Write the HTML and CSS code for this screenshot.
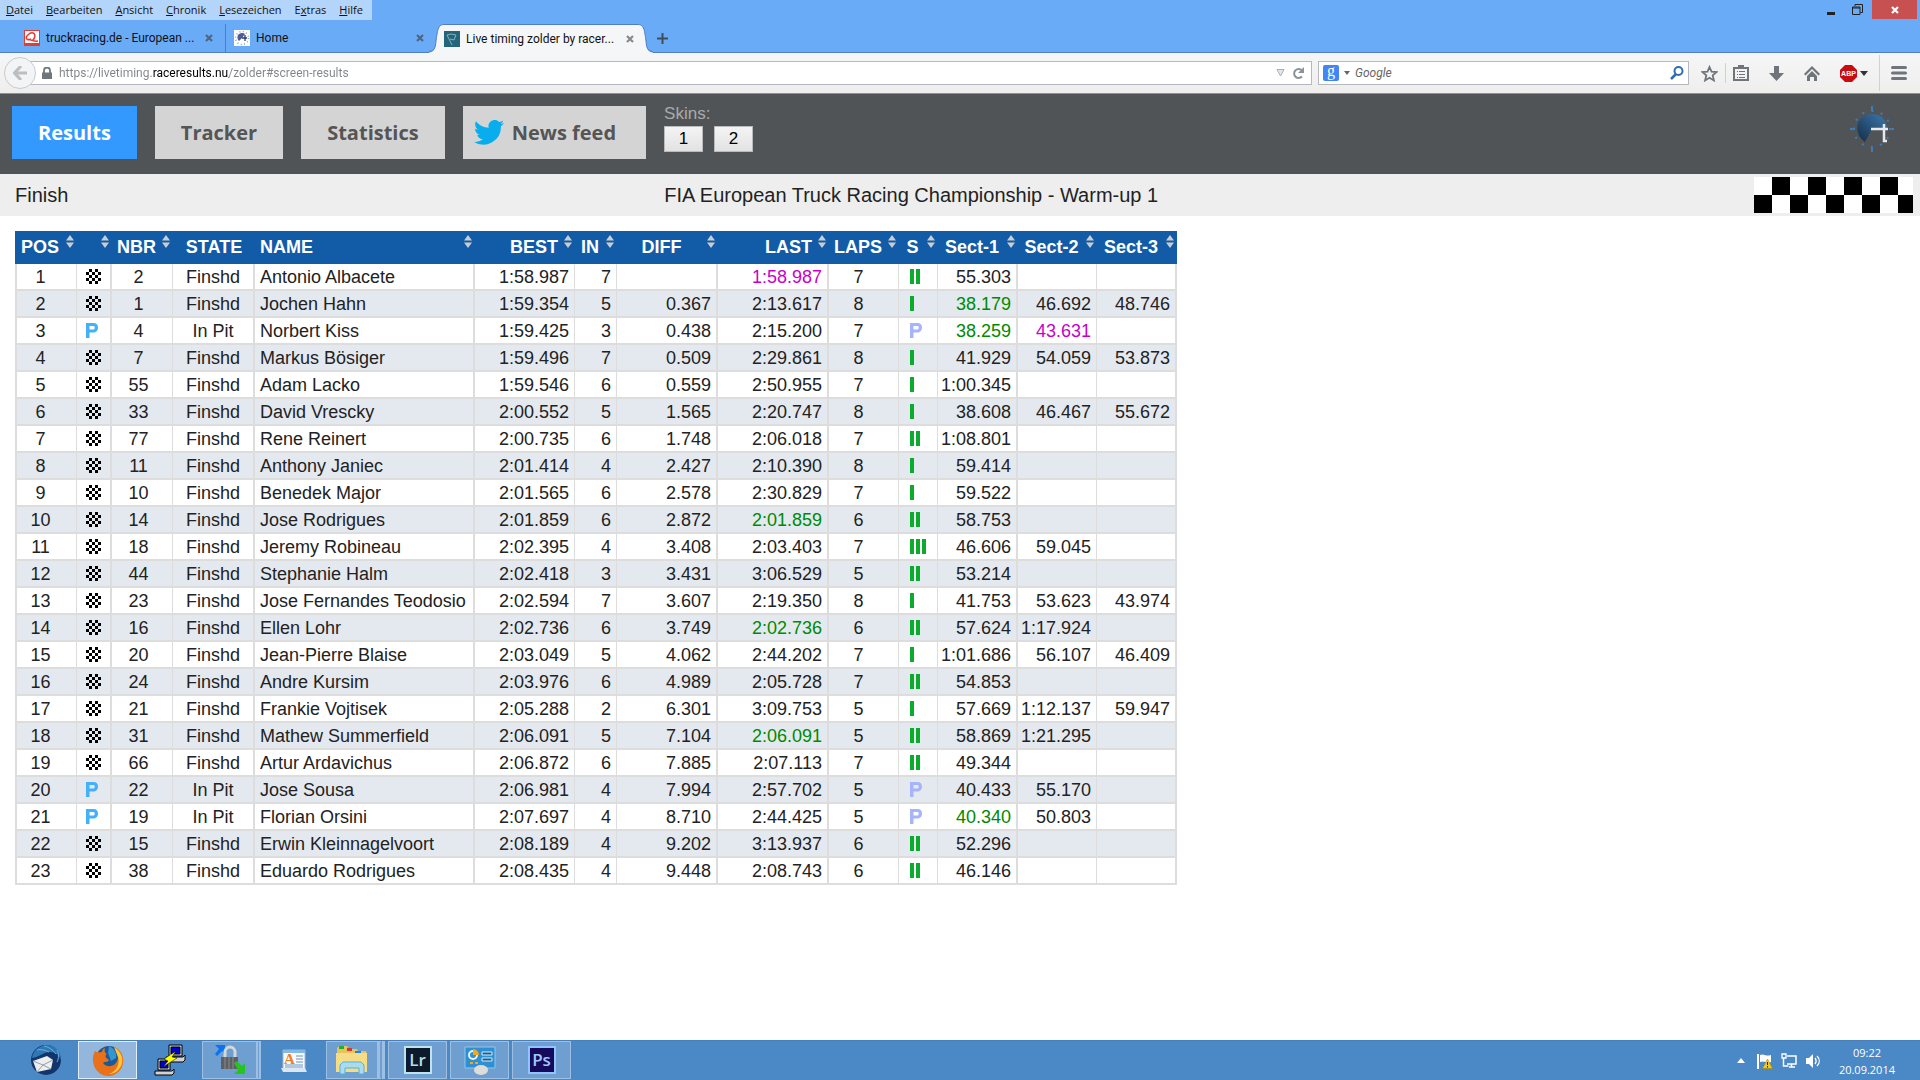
FILE: index.html
```html
<!DOCTYPE html>
<html lang="de">

<head>
  <meta charset="UTF-8">
  <meta name="viewport" content="width=device-width, initial-scale=1.0">
  <title>Live timing zolder by raceresults.nu</title>
  <link rel="stylesheet" href="styles.css">
</head>

<body>
  <svg class="sprite" aria-hidden="true">
    <symbol id="icon-flag" viewBox="0 0 15 15">
      <path d="M3 0h3v3h-3zM9 0h3v3h-3zM0 3h3v3h-3zM6 3h3v3h-3zM12 3h3v3h-3zM3 6h3v3h-3zM9 6h3v3h-3zM0 9h3v3h-3zM6 9h3v3h-3zM12 9h3v3h-3zM3 12h3v3h-3zM9 12h3v3h-3z" fill="#000"/>
    </symbol>
    <symbol id="icon-park" viewBox="0 0 12 15">
      <path d="M0 0h7.500c3 0 4.500 2 4.500 4.500s-1.500 5-4.500 5h-4v5.500h-3.500zM3.500 3v3.500h3.500c1.400 0 1.700-.8 1.700-1.800s-.3-1.700-1.700-1.700z" fill="currentColor" fill-rule="evenodd"/>
    </symbol>
    <symbol id="icon-sort" viewBox="0 0 8 13">
      <path d="M4 0l4 5.500h-8zM0 7.500h8l-4 5.500z" fill="#c9cdd1"/>
    </symbol>
    <symbol id="icon-close" viewBox="0 0 8 8">
      <path d="M1 1l6 6M7 1l-6 6" stroke="currentColor" stroke-width="2.200" fill="none"/>
    </symbol>
  </svg>

  <!-- Browser window -->
  <header class="browser">
    <div class="title-row">
      <nav class="menu-bar">
        <button><u>D</u>atei</button>
        <button><u>B</u>earbeiten</button>
        <button><u>A</u>nsicht</button>
        <button><u>C</u>hronik</button>
        <button><u>L</u>esezeichen</button>
        <button>E<u>x</u>tras</button>
        <button><u>H</u>ilfe</button>
      </nav>
      <div class="window-buttons">
        <button aria-label="Minimieren"><svg width="9" height="12" viewBox="0 0 9 12"><path d="M0 8h8v3h-8z" fill="#222"/></svg></button>
        <button aria-label="Verkleinern"><svg width="11" height="11" viewBox="0 0 11 11"><path d="M3 2V.5h7.500v8h-2M.5 3h7.500v7.500h-7.500zM.5 4h7.500" fill="none" stroke="#222"/></svg></button>
        <button class="window-close" aria-label="Schließen"><svg width="8" height="8"><use href="#icon-close"/></svg></button>
      </div>
    </div>

    <div class="tab-row">
      <div class="tab tab-first">
        <svg width="16" height="16" viewBox="0 0 16 16"><path d="M0 0h16v16h-16z" fill="#e23c35"/><path d="M1 1h14v12h-14z" fill="#fff"/><path d="M7 9c-4 2-6-1-4-3s3-4 6-3 2 5 0 7M3 10c3-2 6 2 11 1" stroke="#e23c35" stroke-width="1.500" fill="none"/></svg>
        <a href="#">truckracing.de - European ...</a>
        <button aria-label="Tab schließen"><svg width="8" height="8"><use href="#icon-close"/></svg></button>
      </div>
      <div class="tab tab-second">
        <svg width="16" height="16" viewBox="0 0 16 16"><path d="M0 0h16v16h-16z" fill="#fff"/><circle cx="8" cy="8" r="6.500" fill="none" stroke="#8c9cc4" stroke-width="1.500" stroke-dasharray="1 2.400"/><path d="M8 8L5 11a4 4 0 0 1 6-7z" fill="#4a5f98"/><path d="M8 8h5M11 5v6" stroke="#2c3e70" stroke-width="1.300"/></svg>
        <a href="#">Home</a>
        <button aria-label="Tab schließen"><svg width="8" height="8"><use href="#icon-close"/></svg></button>
      </div>
      <div class="tab tab-active">
        <svg class="tab-edge" width="15" height="29" viewBox="0 0 15 29"><path d="M0 28.500C8 28 6 20 8 10C9 3 11 .5 15 .5V29H0z" fill="#f5f6f7"/><path d="M0 27.500C8 27 6 20 8 10C9 3 11 .5 15 .5" fill="none" stroke="#4d7fc0"/></svg>
        <div class="tab-body">
          <svg width="16" height="16" viewBox="0 0 16 16"><path d="M0 0h16v16h-16z" fill="#23657a"/><path d="M3 4l4-1 5 1-2 5-4-1M3 4l5 10" stroke="#86b4be" fill="none"/></svg>
          <a href="#screen-results">Live timing zolder by racer...</a>
          <button aria-label="Tab schließen"><svg width="8" height="8"><use href="#icon-close"/></svg></button>
        </div>
        <svg class="tab-edge" width="15" height="29" viewBox="0 0 15 29"><path d="M15 28.500C7 28 9 20 7 10C6 3 4 .5 0 .5V29H15z" fill="#f5f6f7"/><path d="M15 27.500C7 27 9 20 7 10C6 3 4 .5 0 .5" fill="none" stroke="#4d7fc0"/></svg>
      </div>
      <button class="new-tab" aria-label="Neuer Tab"><svg width="11" height="11" viewBox="0 0 11 11"><path d="M5.500 0v11M0 5.500h11" stroke="#444d57" stroke-width="2"/></svg></button>
    </div>

    <div class="toolbar">
      <button class="back" aria-label="Zurück"><svg width="14" height="14" viewBox="0 0 14 14"><path d="M8 0L1.500 7L8 14M2 7h12" fill="none" stroke="#bcbfc2" stroke-width="3.200"/></svg></button>
      <div class="url-box">
        <svg width="10" height="12" viewBox="0 0 10 12"><path d="M2 6V3.500a3 3 0 0 1 6 0V6" fill="none" stroke="#70767a" stroke-width="1.800"/><path d="M0 5.500h10v6.500h-10z" fill="#70767a"/></svg>
        <input class="url" type="text" aria-label="Adresse" value="https://livetiming.raceresults.nu/zolder#screen-results">
        <svg width="9" height="8" viewBox="0 0 9 8"><path d="M1 .5h7L4.500 7z" fill="#e4e7ea" stroke="#a9afb5"/></svg>
        <button aria-label="Neu laden"><svg width="13" height="13" viewBox="0 0 13 13"><path d="M10 9.500a4.500 4.500 0 1 1 0-6" fill="none" stroke="#8b949b" stroke-width="2"/><path d="M12 0v6h-6z" fill="#8b949b"/></svg></button>
      </div>
      <div class="search-box">
        <span class="google">g</span>
        <svg width="6" height="4" viewBox="0 0 6 4"><path d="M0 0h6l-3 4z" fill="#666"/></svg>
        <input type="text" aria-label="Suche" placeholder="Google">
        <button aria-label="Suchen"><svg width="14" height="14" viewBox="0 0 14 14"><circle cx="8.500" cy="5" r="4" fill="none" stroke="#2f6dae" stroke-width="2"/><path d="M6 8L1 13" stroke="#2f6dae" stroke-width="2.500"/></svg></button>
      </div>
      <div class="tool-icons">
        <button aria-label="Lesezeichen hinzufügen"><svg width="17" height="17" viewBox="0 0 17 17"><path d="M8.500 2l2 4.600 5 .5-3.800 3.300 1.200 5-4.400-2.700-4.400 2.700 1.200-5L1.500 7.100l5-.5z" fill="none" stroke="#6f757a" stroke-width="1.800"/></svg></button>
        <span class="divider"></span>
        <button aria-label="Lesezeichen"><svg width="16" height="16" viewBox="0 0 16 16"><path d="M1 3h14v12h-14z" fill="none" stroke="#6f757a" stroke-width="2"/><path d="M5 0h6v4h-6zM4 6h1v1h-1zM6 6h6v1h-6zM4 9h1v1h-1zM6 9h6v1h-6zM4 12h1v1h-1zM6 12h6v1h-6z" fill="#6f757a"/></svg></button>
        <button aria-label="Downloads"><svg width="15" height="15" viewBox="0 0 15 15"><path d="M5 0h5v7h5l-7.500 8L0 7h5z" fill="#6f757a"/></svg></button>
        <button aria-label="Startseite"><svg width="16" height="15" viewBox="0 0 16 15"><path d="M8 0l8 8-1.500 1.500L8 3 1.500 9.500 0 8z" fill="#6f757a"/><path d="M8 5l5 5v5h-3v-4h-4v4h-3v-5z" fill="#6f757a"/></svg></button>
        <button class="abp" aria-label="Adblock Plus">
          <svg width="17" height="17" viewBox="0 0 17 17"><path d="M5 0h7l5 5v7l-5 5h-7l-5-5v-7z" fill="#c70d12"/><text x="8.500" y="11" text-anchor="middle">ABP</text></svg>
          <svg width="8" height="5" viewBox="0 0 8 5"><path d="M0 0h8l-4 5z" fill="#333"/></svg>
        </button>
        <span class="divider tall"></span>
        <button aria-label="Menü"><svg width="16" height="14" viewBox="0 0 16 14"><path d="M1.500 1.500h13M1.500 7h13M1.500 12.500h13" stroke="#6f757a" stroke-width="3" stroke-linecap="round"/></svg></button>
      </div>
    </div>
  </header>

  <!-- Live timing page -->
  <div class="page-header">
    <nav class="screens">
      <button class="screen active">Results</button>
      <button class="screen">Tracker</button>
      <button class="screen">Statistics</button>
      <button class="screen news">
        <svg width="30" height="25" viewBox="0 0 30 25"><path d="M30 3c-1.100.5-2.300.8-3.500 1 1.200-.8 2.200-2 2.700-3.400-1.200.7-2.500 1.200-3.900 1.500A6.200 6.200 0 0 0 14.700 7.800C9.600 7.500 5 5.100 2 1.200c-1.600 2.800-.8 6.400 1.900 8.300-1 0-2-.3-2.800-.8 0 3 2.100 5.600 4.900 6.200-.9.200-1.900.3-2.800.1.800 2.500 3.100 4.300 5.800 4.300A12.500 12.500 0 0 1 0 21.900 17.600 17.600 0 0 0 26.900 6.300C28.100 5.400 29.200 4.300 30 3z" fill="#08adee"/></svg>
        News feed
      </button>
    </nav>
    <div class="skins">
      <span>Skins:</span>
      <div class="skin-buttons">
        <button>1</button>
        <button>2</button>
      </div>
    </div>
    <svg class="logo" width="44" height="46" viewBox="0 0 44 46">
      <defs>
        <linearGradient id="dial" x1="1" y1="0" x2="0" y2="1">
          <stop offset="0" stop-color="#3c7ab0"/>
          <stop offset="1" stop-color="#152c45"/>
        </linearGradient>
      </defs>
      <circle cx="22" cy="23" r="18" fill="none" stroke="#3d7cb8" stroke-width="2" stroke-dasharray="2 7.425" stroke-dashoffset="1"/>
      <path d="M22 0v5M22 41v5M0 23h5M39 23h5" stroke="#3d7cb8" stroke-width="2"/>
      <path d="M22 23L15 36C3 28 5 8 22 8C31 8 37 14 37 23z" fill="url(#dial)"/>
      <path d="M21 23h17M34 18v17h3" stroke="#e6e9ed" stroke-width="2.500" fill="none"/>
    </svg>
  </div>

  <div class="session-bar">
    <span>Finish</span>
    <h1>FIA European Truck Racing Championship - Warm-up 1</h1>
    <div class="checkered"></div>
  </div>

  <main>
    <table class="results">
      <thead>
        <tr id="head-row"></tr>
      </thead>
      <tbody id="results-body"></tbody>
    </table>
  </main>

  <!-- Windows taskbar -->
  <footer class="taskbar">
    <div class="tasks">
      <button class="task" aria-label="Thunderbird">
        <svg width="32" height="32" viewBox="0 0 32 32"><circle cx="16" cy="16" r="15" fill="#12366b"/><path d="M2 14C3 5 11 1 18 1c8 1 13 8 13 15-2-5-6-8-10-8-7-1-11 5-19 6z" fill="#2d78b5"/><path d="M7 6c4-1 8 0 12 2M14 2c5 1 9 4 12 8M27 6c2 4 2 8 0 12" stroke="#6ab0dc" fill="none"/><path d="M3 17l14-5 6 4-2 9-14 3z" fill="#eceef0"/><path d="M3 17l10 4 10-5M7 28l6-7 8 4" fill="none" stroke="#9a9da1"/></svg>
      </button>
      <button class="task open current" aria-label="Firefox">
        <svg width="32" height="32" viewBox="0 0 32 32"><circle cx="17" cy="15" r="13" fill="#195a9c"/><path d="M17 2c5 2 8 7 7 12l-5 3-3-8z" fill="#3595cf"/><path d="M3 7c2 2 4 1 7 1 0-2 1-3 3-4-1 3 0 5 2 6-4 3 1 5 2 6-2 3-4 1-6 3 5 6 14 3 15-5 0-5-2-8-4-11 7 3 10 9 9 16A15 15 0 0 1 2 22C0 16 1 11 3 7z" fill="#e8711a"/><path d="M22 3c8 5 10 13 7 19-3 6-8 8-12 8 8-3 11-10 9-17z" fill="#ffc736"/></svg>
      </button>
      <button class="task" aria-label="PuTTY">
        <svg width="32" height="32" viewBox="0 0 32 32" stroke="#000"><path d="M15 1h13v11h-13zM12 13h17l2-2v5l-2 2h-17zM4 15h12v11h-12zM1 27h17l2-2v4l-2 2h-17z" fill="#d3d3d3"/><path d="M17 3h9v7h-9zM6 17h8v7h-8z" fill="#00c"/><path d="M22 7L10 15l4 2-5 6 14-9-5-1z" fill="#ff0" stroke-width=".5"/></svg>
      </button>
      <button class="task open stack-one" aria-label="VPN">
        <svg width="32" height="32" viewBox="0 0 32 32"><path d="M1 1h10v9l-3-3-5 5-2-2 4-5z" fill="#0b73f1"/><path d="M11 14V8a5 5 0 0 1 10 0v6" fill="none" stroke="#d5d7d9" stroke-width="3"/><path d="M7 13h17v12h-17z" fill="#5d6063"/><path d="M11 13v12M15 13v12M19 13v12" stroke="#888c8f"/><path d="M20 19l3-2 5 5 3-3v11h-11l4-4z" fill="#26c41f"/></svg>
      </button>
      <button class="task" aria-label="WordPad">
        <svg width="26" height="28" viewBox="0 0 26 28"><path d="M2 4h22v20h-22z" fill="#f7fafd" stroke="#9fb8d4"/><path d="M0 22h24l2 4h-24z" fill="#dae6f2"/><path d="M2 4h22v3h-22z" fill="#83b9e6"/><path d="M15 10h7M15 13h7M15 16h7M4 19h18M4 21h18" stroke="#6d93bd"/><text class="word-a" x="3" y="18">A</text></svg>
      </button>
      <button class="task open stack-two" aria-label="Explorer">
        <svg width="34" height="30" viewBox="0 0 34 30"><path d="M2 3l2-2h8l2 3h8l1 2h8l1 3v17h-30z" fill="#e6c35b"/><path d="M4 1h5v3h-5z" fill="#1caf3b"/><path d="M12 3h5v3h-5z" fill="#d33b28"/><path d="M20 6h6v3h-6z" fill="#2585d8"/><path d="M1 8h31v19h-31z" fill="#f5dc86"/><path d="M5 29v-9l3-3h18l3 3v9h-5v-6h-14v6z" fill="#a8dcf0" stroke="#5cafd1"/></svg>
      </button>
      <button class="task open" aria-label="Lightroom"><span class="adobe lr">Lr</span></button>
      <button class="task open" aria-label="Systemsteuerung">
        <svg width="32" height="30" viewBox="0 0 32 30"><path d="M1 2h30v21h-30z" fill="#2f8fd3" stroke="#8fc9ee"/><circle cx="9" cy="10" r="4" fill="none" stroke="#e8f4fc" stroke-width="2"/><path d="M9 10V4a6 6 0 0 1 6 6z" fill="#f7a51d"/><path d="M18 7h10v3h-10zM18 13h10v3h-10z" fill="#12619f" stroke="#d8eefa"/><path d="M6 18h3M11 18h3" stroke="#f7a51d" stroke-width="2"/><ellipse cx="17" cy="25" rx="7" ry="5" fill="#dcdcda"/></svg>
      </button>
      <button class="task open" aria-label="Photoshop"><span class="adobe ps">Ps</span></button>
    </div>
    <div class="tray">
      <svg width="8" height="5" viewBox="0 0 8 5"><path d="M4 0l4 5h-8z" fill="#fff"/></svg>
      <svg width="16" height="16" viewBox="0 0 16 16"><path d="M1 1v15" stroke="#fff" stroke-width="2"/><path d="M3 2c4-2 5 2 11 0v7c-5 2-6-2-11 0z" fill="#fff"/><path d="M10.500 6l5 9.500h-10z" fill="#f5c81e" stroke="#a17a00" stroke-width=".5"/><path d="M10.500 9v3M10.500 13v1.500" stroke="#222"/></svg>
      <svg width="16" height="16" viewBox="0 0 16 16"><path d="M6 3h9v8h-9M8 14h6M10.500 11v3M2.500 5v8h5" fill="none" stroke="#fff" stroke-width="1.500"/><path d="M1 1h4v4h-4z" fill="none" stroke="#fff" stroke-width="1.300"/></svg>
      <svg width="16" height="16" viewBox="0 0 16 16"><path d="M1 5h3l4-4v14l-4-4h-3z" fill="#fff"/><path d="M10 5c1.500 2 1.500 4 0 6M12 3c3 3 3 7 0 10" fill="none" stroke="#fff" stroke-width="1.300"/></svg>
      <time class="clock" datetime="2014-09-20T09:22">09:22<br>20.09.2014</time>
    </div>
  </footer>

  <script src="script.js"></script>
</body>

</html>
```
FILE: styles.css
```css
/* General Styles */
* {
  box-sizing: border-box;
}

body {
  display: flex;
  flex-direction: column;
  min-height: 100vh;
  margin: 0;
  background-color: #fff;
  color: #222;
  font-family: "Liberation Sans", Arial, sans-serif;
  font-size: 18px;
}

button,
input {
  margin: 0;
  padding: 0;
  border: none;
  background: none;
  color: inherit;
  font: inherit;
}

button {
  cursor: pointer;
}

svg {
  display: block;
  flex-shrink: 0;
}

.sprite {
  position: absolute;
  width: 0;
  height: 0;
}

/* Browser window */
.browser {
  background-color: #6aabf7;
  color: #111;
  font-family: Roboto, "Noto Sans", sans-serif;
  font-size: 12px;
}

.title-row {
  display: flex;
  justify-content: space-between;
  height: 20px;
}

.menu-bar {
  display: flex;
  gap: 1px;
  padding-right: 3px;
  background-color: #b3d4fb;
  font-family: "Open Sans", "Noto Sans", sans-serif;
  font-size: 11px;
}

.menu-bar button {
  padding: 0 6px 2px;
}

.window-buttons {
  display: flex;
  gap: 16px;
  height: 19px;
  padding-right: 3px;
}

.window-buttons button {
  display: flex;
  align-items: center;
}

.window-buttons .window-close {
  justify-content: center;
  width: 45px;
  margin-left: -7px;
  background-color: #c75050;
  color: #fff;
}

.tab-row {
  display: flex;
  align-items: flex-end;
  height: 33px;
  border-bottom: 1px solid #4d7fc0;
}

.tab {
  display: flex;
  align-items: center;
  height: 28px;
  gap: 6px;
}

.tab a {
  flex: 1;
  color: #111;
  text-decoration: none;
  white-space: nowrap;
}

.tab button {
  color: #4f6680;
}

.tab-first {
  width: 226px;
  padding: 0 12px 0 24px;
  border-right: 1px solid #4d7fc0;
}

.tab-second {
  width: 203px;
  padding: 0 5px 0 8px;
}

.tab-active {
  width: 224px;
  height: 29px;
  margin-bottom: -1px;
  gap: 0;
}

.tab-body {
  display: flex;
  flex: 1;
  align-items: center;
  gap: 6px;
  height: 29px;
  padding-right: 4px;
  border-top: 1px solid #4d7fc0;
  background-color: #f5f6f7;
}

.tab-active button {
  color: #858b91;
}

.new-tab {
  height: 28px;
  padding: 0 4px;
}

.toolbar {
  display: flex;
  align-items: center;
  height: 41px;
  padding-left: 4px;
  border-bottom: 1px solid #8f9092;
  background: linear-gradient(#f5f6f7, #efeeed);
}

.back {
  display: flex;
  align-items: center;
  justify-content: center;
  position: relative;
  width: 32px;
  height: 32px;
  border: 1px solid #c8cbce;
  border-radius: 50%;
  background-color: #f3f4f5;
}

.url-box,
.search-box {
  display: flex;
  align-items: center;
  height: 24px;
  border: 1px solid #b4b9bf;
  background-color: #fff;
}

.url-box {
  flex: 1;
  gap: 7px;
  margin-left: -8px;
  padding: 0 6px 0 13px;
}

/* The domain part is darker than the rest of the address */
.url {
  flex: 1;
  background: linear-gradient(90deg, #808488 94px, #000 94px, #000 170px, #808488 170px);
  background-clip: text;
  -webkit-background-clip: text;
  color: transparent;
}

.search-box {
  width: 371px;
  gap: 5px;
  margin-left: 6px;
  padding: 0 4px;
}

.search-box input {
  flex: 1;
}

.search-box input::placeholder {
  color: #666;
  font-style: italic;
}

.google {
  width: 16px;
  height: 16px;
  border-radius: 2px;
  background-color: #4285f4;
  color: #fff;
  font-family: "Liberation Serif", serif;
  font-size: 16px;
  line-height: 12px;
  text-align: center;
}

.tool-icons {
  display: flex;
  align-items: center;
  gap: 20px;
  height: 40px;
  padding: 0 13px 0 12px;
}

.tool-icons .divider {
  width: 1px;
  height: 20px;
  margin: 0 -13px;
  background-color: #cfd2d4;
}

.tool-icons .tall {
  height: 36px;
  margin: 0 -9px;
}

.abp {
  display: flex;
  align-items: center;
  gap: 3px;
}

.abp text {
  fill: #fff;
  font-family: "Liberation Sans", sans-serif;
  font-size: 7px;
  font-weight: bold;
}

/* Page header */
.page-header {
  display: flex;
  align-items: flex-start;
  gap: 18px;
  height: 80px;
  padding: 12px 26px 0 12px;
  background-color: #505457;
}

.screens {
  display: flex;
  gap: 18px;
}

.screen {
  height: 53px;
  padding: 0 26px;
  background-color: #d4d4d4;
  color: #555;
  font-family: "Open Sans", "Noto Sans", sans-serif;
  font-size: 20px;
  font-weight: bold;
}

.screen.active {
  background-color: #3399ff;
  color: #fff;
}

.news {
  display: flex;
  align-items: center;
  gap: 8px;
  padding: 0 30px 0 11px;
}

.skins {
  color: #aaa;
}

.skins span {
  display: block;
  height: 20px;
  line-height: 16px;
  font-size: 17px;
}

.skin-buttons {
  display: flex;
  gap: 11px;
}

.skin-buttons button {
  width: 39px;
  height: 26px;
  border: 1px solid #bbb;
  background: linear-gradient(#f4f4f4, #e2e2e2);
  color: #000;
  font-size: 17px;
}

.logo {
  margin-left: auto;
}

/* Session bar */
.session-bar {
  display: flex;
  align-items: center;
  justify-content: space-between;
  height: 42px;
  padding: 0 7px 0 15px;
  background-color: #eee;
  font-size: 20px;
}

.session-bar h1 {
  margin: 0;
  font-size: 20px;
  font-weight: normal;
}

.checkered {
  width: 159px;
  height: 36px;
  background: repeating-conic-gradient(#000 0 25%, #fff 0 50%) 0 0 / 36px 36px;
}

/* Results table */
main {
  flex: 1;
  padding: 15px;
}

.results {
  border-collapse: separate;
  border-spacing: 0;
  white-space: nowrap;
}

.results th {
  height: 33px;
  padding: 0;
  background-color: #115ba7;
  color: #fff;
}

.results th button {
  display: flex;
  width: 100%;
  height: 25px;
  gap: 6px;
  padding: 0 3px 0 5px;
  font-weight: bold;
  text-align: inherit;
}

.results th span {
  flex: 1;
  line-height: 24px;
}

.results td {
  height: 27px;
  padding: 2px 5px 0;
  border-right: 1px solid #ddd;
  border-bottom: 2px solid #ddd;
  line-height: 23px;
  text-align: right;
}

.results tr:nth-child(even) td {
  background-color: #e4e9f0;
}

.results td.pos {
  padding-right: 17px;
  border-left: 2px solid #ddd;
  text-align: center;
}

.results td.flag {
  padding: 0 9px;
}

.results td.nbr {
  padding-right: 12px;
  text-align: center;
}

.results td.laps {
  padding-right: 15px;
  text-align: center;
}

.results .state {
  text-align: center;
}

.results .name {
  text-align: left;
}

.results td.s {
  padding: 0 0 0 11px;
}

.results td.sect1,
.results td.sect2,
.results td.sect3 {
  padding-left: 2px;
}

.results td.flag,
.results td.state,
.results td.name,
.results td.diff,
.results td.last,
.results td.sect1,
.results td.sect3 {
  border-right-width: 2px;
}

.results th.best,
.results th.last {
  text-align: right;
}

.pos { width: 62px; }
.flag { width: 34px; }
.nbr { width: 61px; }
.state { width: 82px; }
.name { width: 220px; }
.best { width: 100px; }
.in { width: 42px; }
.diff { width: 101px; }
.last { width: 111px; }
.laps { width: 70px; }
.s { width: 39px; }
.sect1 { width: 80px; }
.sect2 { width: 79px; }
.sect3 { width: 80px; }

.personal-best {
  color: #008a00;
}

.overall-best {
  color: #c800c8;
}

.pit {
  color: #42b0fa;
}

.pit-sector {
  color: #a5b4fb;
}

.bars {
  display: flex;
  gap: 2px;
}

.bars i {
  width: 4px;
  height: 15px;
  background-color: #0bac2b;
}

/* Taskbar */
.taskbar {
  display: flex;
  justify-content: space-between;
  height: 40px;
  border-top: 1px solid #477fb9;
  background-color: #4b88c6;
  color: #fff;
  font-family: "Open Sans", "Noto Sans", sans-serif;
  font-size: 11px;
}

.tasks {
  display: flex;
  gap: 3px;
  padding-left: 16px;
}

.task {
  display: flex;
  align-items: center;
  justify-content: center;
  width: 59px;
  height: 38px;
}

.open {
  border: 1px solid #9dbfe2;
  background-color: #6f9fd0;
}

.current {
  border: 1px solid #e3edf7;
  background-color: #92b6dc;
}

.stack-one {
  border-right: 5px double #9dbfe2;
}

.stack-two {
  border-right: 8px double #9dbfe2;
}

.word-a {
  fill: #ef8022;
  font-family: "Liberation Serif", serif;
  font-size: 15px;
  font-weight: bold;
}

.adobe {
  width: 28px;
  height: 28px;
  border: 2px solid #bfe3ee;
  background-color: #0d1a2c;
  color: #b5dcea;
  font-size: 17px;
  font-weight: 600;
  line-height: 23px;
}

.ps {
  border-color: #8fc4ff;
  background-color: #150a5c;
  color: #9ccaff;
}

.tray {
  display: flex;
  align-items: center;
  gap: 8px;
  padding-right: 25px;
}

.tray svg:first-child {
  margin-right: 4px;
}

.clock {
  margin-left: 10px;
  line-height: 17px;
  text-align: center;
}
```
FILE: script.js
```js
const headRow = document.getElementById("head-row");
const resultsBody = document.getElementById("results-body");

const columns = [
  ["pos", "POS"], ["flag", ""], ["nbr", "NBR"], ["state", "STATE"], ["name", "NAME"],
  ["best", "BEST"], ["in", "IN"], ["diff", "DIFF"], ["last", "LAST"], ["laps", "LAPS"],
  ["s", "S"], ["sect1", "Sect-1"], ["sect2", "Sect-2"], ["sect3", "Sect-3"]
];

// nbr, state, name, best, in, diff, last, laps, sector (P = pit), sect1-3
// * marks a personal best, ! marks the overall best
const results = [
  [2, "Finshd", "Antonio Albacete", "1:58.987", 7, "", "!1:58.987", 7, 2, "55.303", "", ""],
  [1, "Finshd", "Jochen Hahn", "1:59.354", 5, "0.367", "2:13.617", 8, 1, "*38.179", "46.692", "48.746"],
  [4, "In Pit", "Norbert Kiss", "1:59.425", 3, "0.438", "2:15.200", 7, "P", "*38.259", "!43.631", ""],
  [7, "Finshd", "Markus Bösiger", "1:59.496", 7, "0.509", "2:29.861", 8, 1, "41.929", "54.059", "53.873"],
  [55, "Finshd", "Adam Lacko", "1:59.546", 6, "0.559", "2:50.955", 7, 1, "1:00.345", "", ""],
  [33, "Finshd", "David Vrescky", "2:00.552", 5, "1.565", "2:20.747", 8, 1, "38.608", "46.467", "55.672"],
  [77, "Finshd", "Rene Reinert", "2:00.735", 6, "1.748", "2:06.018", 7, 2, "1:08.801", "", ""],
  [11, "Finshd", "Anthony Janiec", "2:01.414", 4, "2.427", "2:10.390", 8, 1, "59.414", "", ""],
  [10, "Finshd", "Benedek Major", "2:01.565", 6, "2.578", "2:30.829", 7, 1, "59.522", "", ""],
  [14, "Finshd", "Jose Rodrigues", "2:01.859", 6, "2.872", "*2:01.859", 6, 2, "58.753", "", ""],
  [18, "Finshd", "Jeremy Robineau", "2:02.395", 4, "3.408", "2:03.403", 7, 3, "46.606", "59.045", ""],
  [44, "Finshd", "Stephanie Halm", "2:02.418", 3, "3.431", "3:06.529", 5, 2, "53.214", "", ""],
  [23, "Finshd", "Jose Fernandes Teodosio", "2:02.594", 7, "3.607", "2:19.350", 8, 1, "41.753", "53.623", "43.974"],
  [16, "Finshd", "Ellen Lohr", "2:02.736", 6, "3.749", "*2:02.736", 6, 2, "57.624", "1:17.924", ""],
  [20, "Finshd", "Jean-Pierre Blaise", "2:03.049", 5, "4.062", "2:44.202", 7, 1, "1:01.686", "56.107", "46.409"],
  [24, "Finshd", "Andre Kursim", "2:03.976", 6, "4.989", "2:05.728", 7, 2, "54.853", "", ""],
  [21, "Finshd", "Frankie Vojtisek", "2:05.288", 2, "6.301", "3:09.753", 5, 1, "57.669", "1:12.137", "59.947"],
  [31, "Finshd", "Mathew Summerfield", "2:06.091", 5, "7.104", "*2:06.091", 5, 2, "58.869", "1:21.295", ""],
  [66, "Finshd", "Artur Ardavichus", "2:06.872", 6, "7.885", "2:07.113", 7, 2, "49.344", "", ""],
  [22, "In Pit", "Jose Sousa", "2:06.981", 4, "7.994", "2:57.702", 5, "P", "40.433", "55.170", ""],
  [19, "In Pit", "Florian Orsini", "2:07.697", 4, "8.710", "2:44.425", 5, "P", "*40.340", "50.803", ""],
  [15, "Finshd", "Erwin Kleinnagelvoort", "2:08.189", 4, "9.202", "3:13.937", 6, 2, "52.296", "", ""],
  [38, "Finshd", "Eduardo Rodrigues", "2:08.435", 4, "9.448", "2:08.743", 6, 2, "46.146", "", ""]
];

function icon(id, width, height, className = "") {
  return `<svg class="${className}" width="${width}" height="${height}"><use href="#icon-${id}"/></svg>`;
}

function formatTime(value) {
  const text = String(value);
  if (text[0] === "*") return `<span class="personal-best">${text.slice(1)}</span>`;
  if (text[0] === "!") return `<span class="overall-best">${text.slice(1)}</span>`;
  return text;
}

function renderSector(sector) {
  if (sector === "P") return icon("park", 12, 15, "pit-sector");
  return `<div class="bars">${"<i></i>".repeat(sector)}</div>`;
}

// The state column can't be sorted
columns.forEach(([key, label]) => {
  const th = document.createElement("th");
  th.className = key;
  th.innerHTML = key === "state"
    ? label
    : `<button aria-label="Sort ${label}"><span>${label}</span>${icon("sort", 8, 13)}</button>`;
  headRow.appendChild(th);
});

results.forEach((result, index) => {
  const inPit = result[1] === "In Pit";
  const flag = inPit ? icon("park", 12, 15, "pit") : icon("flag", 15, 15);
  const cells = [index + 1, flag, ...result];
  const row = document.createElement("tr");

  columns.forEach(([key], i) => {
    const td = document.createElement("td");
    td.className = key;
    td.innerHTML = key === "s" ? renderSector(cells[i]) : key === "flag" ? flag : formatTime(cells[i]);
    row.appendChild(td);
  });
  resultsBody.appendChild(row);
});
```
